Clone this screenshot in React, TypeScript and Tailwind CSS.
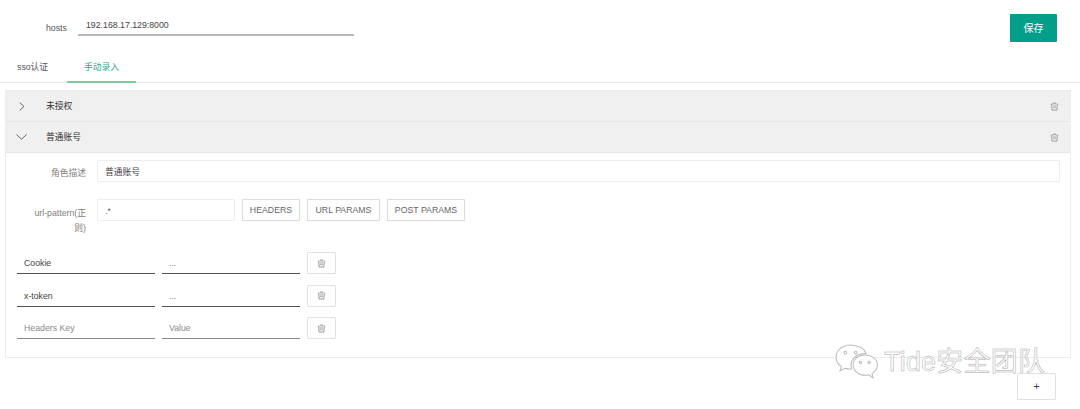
import React from "react";

const font = "font-['Liberation_Sans','Noto_Sans_CJK_SC',sans-serif]";

function Trash({ className = "" }: { className?: string }) {
  return (
    <svg viewBox="0 0 12 12" className={`h-[9px] w-[9px] ${className}`} fill="#ececec" stroke="#9a9a9a" strokeWidth="1.2">
      <path d="M1 3h10M4.2 3V1.4h3.6V3" fill="none" />
      <path d="M2.2 3l.5 7.8h6.6L9.8 3" />
      <path d="M4.200 5.200h3.600M4.200 7.200h3.600" strokeWidth="1" />
    </svg>
  );
}

function PanelHeader({ title, open }: { title: string; open?: boolean }) {
  return (
    <div className="flex h-[31px] items-center border-b border-[#e6e6e6] bg-[#f0f0f0] pr-[11px]">
      <div className="flex w-[40px] justify-start pl-[10px]">
        {open ? (
          <svg width="11" height="6" viewBox="0 0 11 6" fill="none" stroke="#666" strokeWidth="1">
            <path d="M.5.500 5.500 5.300 10.500.500" />
          </svg>
        ) : (
          <svg width="6" height="9" viewBox="0 0 6 9" fill="none" stroke="#666" strokeWidth="1" className="ml-[3px]">
            <path d="M.7.500 5 4.500.7 8.500" />
          </svg>
        )}
      </div>
      <span className="pt-[2px] text-[8.75px] text-[#333]">{title}</span>
      <Trash className="ml-auto" />
    </div>
  );
}

function OutlineButton({ label, width }: { label: string; width: string }) {
  return (
    <button className={`h-[22px] ${width} rounded-[1px] border border-[#dcdcdc] bg-white pt-[2px] text-[8.75px] text-[#666] shadow-[0_0_1px_#e5e5e5]`}>
      {label}
    </button>
  );
}

function HeaderRow({ k, v, placeholder }: { k?: string; v?: string; placeholder?: boolean }) {
  return (
    <div className="flex items-end gap-[7px]">
      <div className={`h-[22px] w-[138px] border-b pl-[7px] text-[8.75px] leading-[22px] ${placeholder ? "border-[#888] text-[#8a8a8a]" : "border-[#555] text-[#444]"}`}>
        {k}
      </div>
      <div className={`h-[22px] w-[138px] border-b pl-[7px] text-[8.75px] leading-[23px] ${placeholder ? "border-[#888] text-[#8a8a8a]" : "border-[#555] text-[#777]"}`}>
        {v}
      </div>
      <button className="flex h-[22px] w-[29px] items-center justify-center rounded-[1px] border border-[#e0e0e0] bg-white">
        <Trash />
      </button>
    </div>
  );
}

export default function App() {
  return (
    <div className={`relative h-[409px] w-[1080px] overflow-hidden bg-white ${font}`}>
      {/* hosts row */}
      <div className="flex h-[53px] items-start pl-[46px] pr-[23px] pt-[14px]">
        <span className="mt-[9px] w-[32px] text-[8.75px] leading-[11px] text-[#555]">hosts</span>
        <div className="h-[22px] w-[276px] border-b-2 border-[#b8b8b8] pl-[8px] text-[8.75px] leading-[23px] text-[#444]">
          192.168.17.129:8000
        </div>
        <button className="ml-auto h-[28px] w-[47px] rounded-[1px] bg-[#019e8a] text-[10px] text-white">保存</button>
      </div>

      {/* tabs */}
      <div className="flex h-[30px] border-b border-[#e8e8e8]">
        <div className="w-[67px] pl-[17px] pt-[9px] text-[8.75px] leading-[11px] text-[#555]">sso认证</div>
        <div className="h-[30px] w-[69px] border-b-2 border-[#7cc99b] pt-[9px] text-center text-[8.75px] leading-[11px] text-[#2ba992]">
          手动录入
        </div>
      </div>

      {/* panel */}
      <div className="ml-[5px] mt-[7px] h-[268px] w-[1066px] border border-[#ececec]">
        <PanelHeader title="未授权" />
        <PanelHeader title="普通账号" open />

        <div className="pl-[11px] pt-[7px]">
          <div className="flex items-center">
            <span className="w-[69px] pt-[5px] text-right text-[8.75px] text-[#808080]">角色描述</span>
            <div className="ml-[11px] h-[22px] w-[963px] rounded-[1px] border border-[#eeeeee] pl-[7px] text-[8.75px] leading-[22px] text-[#444]">
              普通账号
            </div>
          </div>

          <div className="mt-[17px] flex items-start">
            <span className="mt-[7px] w-[69px] text-right text-[8.75px] leading-[15px] text-[#808080]">
              url-pattern(正
              <br />
              则)
            </span>
            <div className="ml-[11px] h-[22px] w-[138px] rounded-[1px] border border-[#eeeeee] pl-[7px] text-[8.75px] leading-[22px] text-[#666]">
              .*
            </div>
            <div className="ml-[7px] flex gap-[7px]">
              <OutlineButton label="HEADERS" width="w-[58px]" />
              <OutlineButton label="URL PARAMS" width="w-[73px]" />
              <OutlineButton label="POST PARAMS" width="w-[78px]" />
            </div>
          </div>

          <div className="mt-[16px] flex flex-col gap-[10.5px]">
            <HeaderRow k="Cookie" v="..." />
            <HeaderRow k="x-token" v="..." />
            <HeaderRow k="Headers Key" v="Value" placeholder />
          </div>
        </div>
      </div>

      {/* add button */}
      <div className="relative z-10 mt-[15px] flex justify-end pr-[24px]">
        <button className="h-[27px] w-[39px] rounded-[1px] border border-[#e0e0e0] bg-white text-[11px] text-[#444]">+</button>
      </div>

      {/* watermark */}
      <div className="pointer-events-none absolute left-[835px] top-[342px] flex items-center">
        <svg width="43" height="38" viewBox="0 0 41.500 35" fill="#fff" stroke="#bdbdbd" strokeWidth="1">
          <path d="M15 1C7.500 1 1 6 1 13.200c0 3.600 2 6.600 5.200 8.800l-1.400 4 5-2.500c1.700.5 3 .8 4.700.8.500 0 1 0 1.500-.1-.4-1.200-.6-2.300-.6-3.500 0-6.300 5.800-11.300 13-11.300h1.500C29 4.800 22.500 1 15 1Z" />
          <path d="M41 20.500c0-5.400-5.300-9.800-12-9.800s-11.500 4.400-11.500 9.800 5.300 9.800 11.500 9.800c1.300 0 2.500-.2 3.700-.5l4.100 3-1.100-4.100c2.600-1.900 5.300-5.100 5.300-8.200Z" />
          <circle cx="10" cy="8.500" r="1.300" />
          <circle cx="20" cy="8.500" r="1.300" />
          <circle cx="24.500" cy="18" r="1.100" />
          <circle cx="33" cy="18" r="1.100" />
        </svg>
        <span className="ml-[6px] text-[27px] leading-[40px] tracking-[0.2px] text-white [-webkit-text-stroke:0.5px_#aaaaaa]">
          Tide安全团队
        </span>
      </div>
    </div>
  );
}
